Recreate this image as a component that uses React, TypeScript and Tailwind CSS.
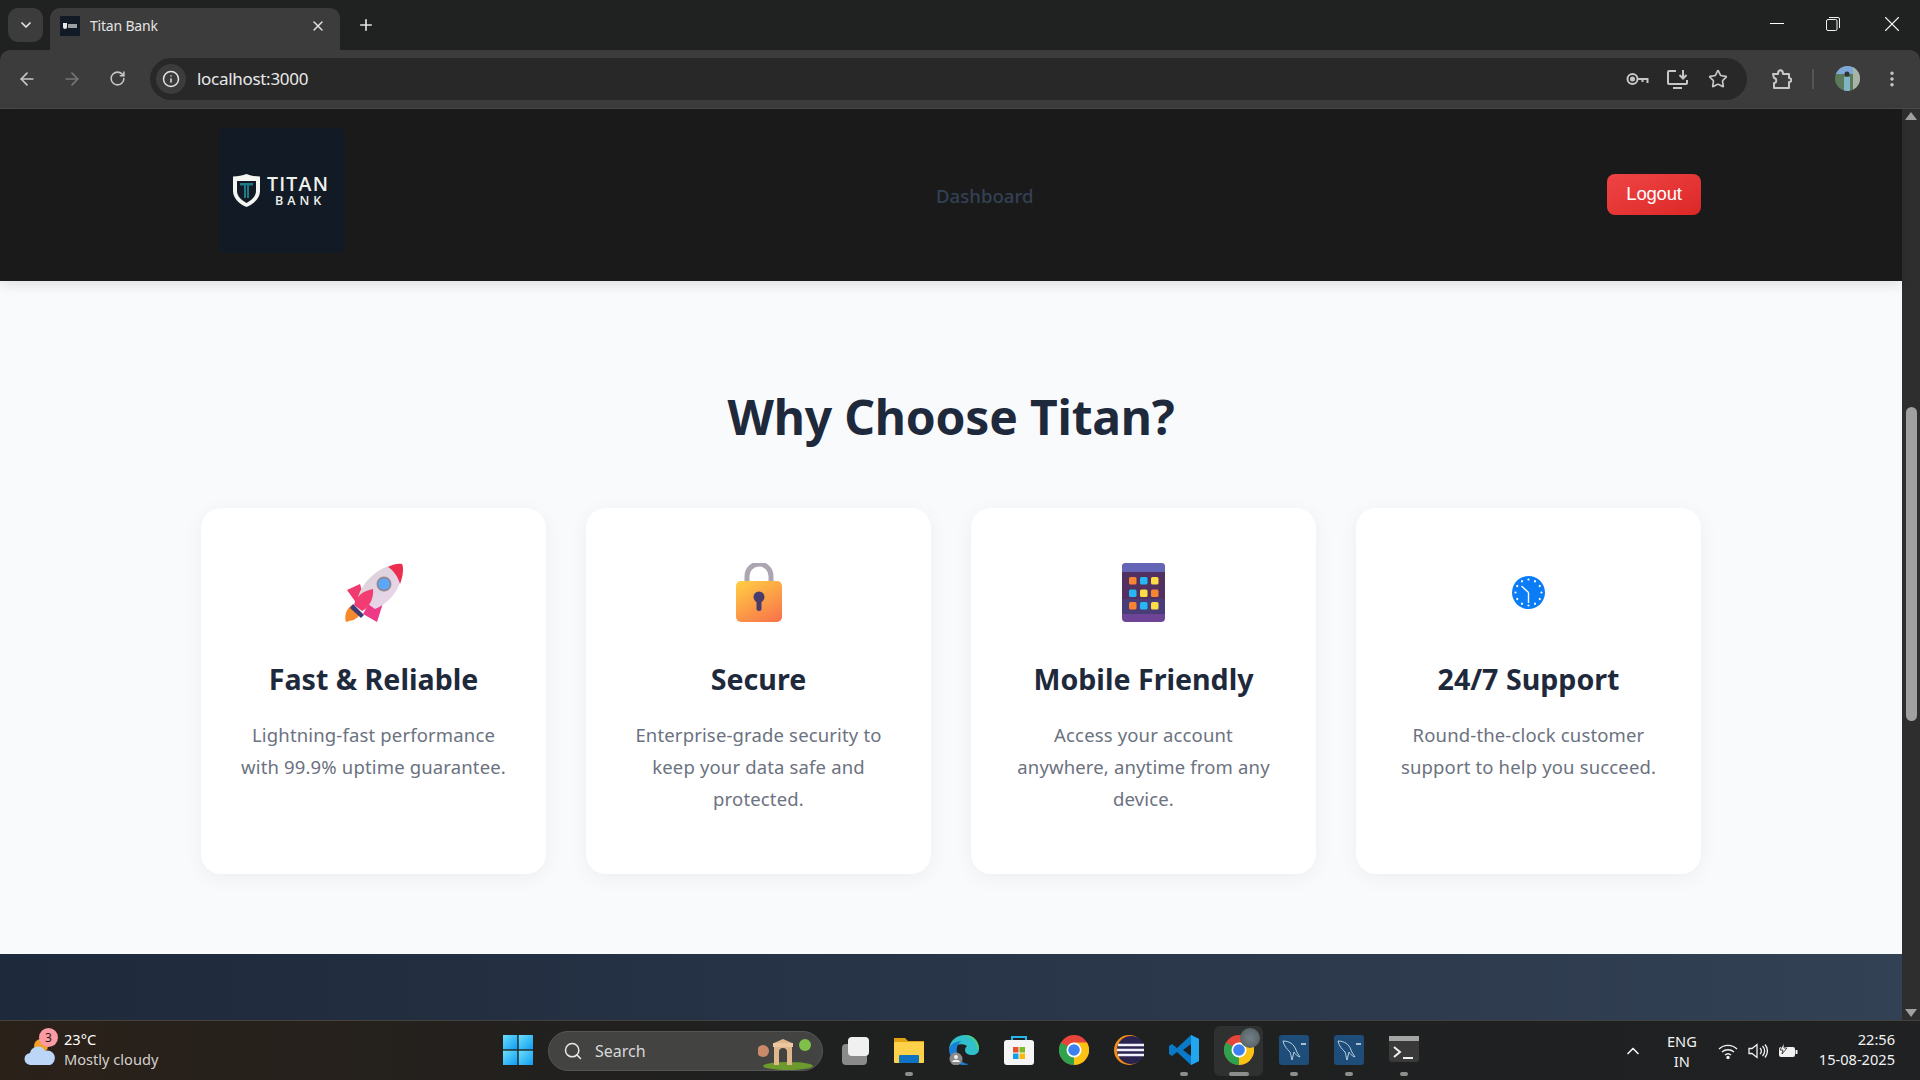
import { ArrowLeft, ArrowRight, ChevronDown, ChevronUp, EllipsisVertical, Info, Plus, RotateCw, Search, Star, X } from "lucide-react";

const features = [
  { icon: <RocketIcon />, title: "Fast & Reliable", text: "Lightning-fast performance with 99.9% uptime guarantee." },
  { icon: <LockIcon />, title: "Secure", text: "Enterprise-grade security to keep your data safe and protected." },
  { icon: <PhoneIcon />, title: "Mobile Friendly", text: "Access your account anywhere, anytime from any device." },
  { icon: <ClockIcon />, title: "24/7 Support", text: "Round-the-clock customer support to help you succeed." },
];

function RocketIcon() {
  return (
    <svg width="60" height="60" viewBox="0 0 60 60">
      <defs>
        <linearGradient id="rb" x1="0" y1="0" x2="1" y2="1">
          <stop offset="0" stopColor="#d8d2d4" />
          <stop offset="1" stopColor="#ecd6f0" />
        </linearGradient>
      </defs>
      <path d="M2 59c-2-6 0-13 6-17l9 8c-2 2-3 5-6 6-1 2-5 1-9 3z" fill="#f58a2c" />
      <path d="M3 27l13-6 6 20-9 0z" fill="#ee3a6c" />
      <path d="M24 42l17-8-8 25-14-8z" fill="#ee3a86" />
      <path d="M14 34C18 20 32 6 48 2l10 6c0 16-12 32-27 38z" fill="url(#rb)" />
      <path d="M44 4c5-3 11-4 14-3 2 3 1 13-2 20C54 14 50 8 44 4z" fill="#ee2e4e" />
      <path d="M10 42c2-8 8-14 19-16 1 6-2 18-11 22z" fill="#f23c72" />
      <path d="M9 41l11 11-3 3-11-10z" fill="#3d3a78" />
      <circle cx="40" cy="21" r="7.500" fill="#8f8a95" />
      <circle cx="40" cy="21" r="5.500" fill="#5ba6ff" />
    </svg>
  );
}

function LockIcon() {
  return (
    <svg width="46" height="59" viewBox="0 0 46 59">
      <defs>
        <linearGradient id="lb" x1="0.2" y1="0" x2="0.8" y2="1">
          <stop offset="0" stopColor="#ffc843" />
          <stop offset="1" stopColor="#f8774a" />
        </linearGradient>
      </defs>
      <path d="M11 22V13a12 12 0 0 1 24 0v9" fill="none" stroke="#aca6b2" strokeWidth="5" />
      <rect x="0" y="18" width="46" height="41" rx="5" fill="url(#lb)" />
      <circle cx="23" cy="34" r="5.500" fill="#4a3b6e" />
      <rect x="20.500" y="34" width="5" height="14" rx="2.500" fill="#4a3b6e" />
    </svg>
  );
}

function PhoneIcon() {
  const colors = ["#f58433", "#27b7f4", "#fbdc47", "#27b7f4", "#fbdc47", "#f58433", "#f58433", "#27b7f4", "#fbdc47"];
  return (
    <svg width="43" height="59" viewBox="0 0 43 59">
      <rect width="43" height="59" rx="4" fill="#6d4496" />
      <path d="M0 9V4a4 4 0 0 1 4-4h35a4 4 0 0 1 4 4v5z" fill="#6565b8" />
      <rect y="9" width="43" height="42" fill="#523060" />
      <rect y="36" width="43" height="15" fill="#4a3c78" />
      {colors.map((c, i) => (
        <rect key={i} x={7 + (i % 3) * 11} y={14 + Math.floor(i / 3) * 12.5} width="7.500" height="7.500" rx="1.500" fill={c} />
      ))}
    </svg>
  );
}

function ClockIcon() {
  const dots = Array.from({ length: 12 }, (_, i) => i * 30);
  return (
    <svg width="33" height="33" viewBox="0 0 33 33">
      <circle cx="16.500" cy="16.500" r="16.500" fill="#0a7cf5" />
      {dots.map((d) => (
        <circle key={d} cx="16.500" cy="3.500" r="1.100" fill="#fff" transform={`rotate(${d} 16.500 16.500)`} />
      ))}
      <path d="M16.500 16.500L9.500 10M16.500 16.500V27" stroke="#fff" strokeWidth="1.400" fill="none" />
    </svg>
  );
}

function Logo() {
  return (
    <div className="w-[125px] h-[125px] mb-[9px] rounded-md bg-[#111a25] flex items-center gap-[7px] shrink-0 pl-[14px]">
      <svg width="27" height="33" viewBox="0 0 27 33">
        <path d="M13.500 0c4 1.600 8.500 2.500 13.500 2.500V17c0 7-6 13-13.500 16C6 30 0 24 0 17V2.500C5 2.500 9.500 1.600 13.500 0z" fill="#f4f5f0" />
        <path d="M4 7h19v10c0 5-4 9-9.500 12C8 26 4 22 4 17z" fill="#111a25" />
        <path d="M7 9h13v2.500h-4V24h-5V11.500H7z" fill="#1d7a85" />
        <path d="M13 11h1v14h-1z" fill="#111a25" />
      </svg>
      <div className="flex flex-col items-center font-['Open_Sans',sans-serif] text-[#eef0ea] leading-none">
        <span className="text-[19.500px] font-semibold tracking-[1.200px]">TITAN</span>
        <span className="text-[12.500px] font-semibold tracking-[4px] mt-[1.500px] ml-[4px]">BANK</span>
      </div>
    </div>
  );
}

function BrowserChrome() {
  return (
    <div className="bg-[#202221] shrink-0">
      {/* Tab strip */}
      <div className="h-[50px] flex items-end text-[#e3e3e3]">
        <div className="w-[35px] h-[34px] ml-2 mb-2 rounded-[10px] bg-[#3c3c3c] flex items-center justify-center">
          <ChevronDown size={16} strokeWidth={2.600} />
        </div>
        <div className="w-[290px] h-[42px] ml-[7px] rounded-t-[10px] bg-[#3c3c3c] flex items-center pl-[10px] pr-[14px] pb-[7px]">
          <div className="w-5 h-5 bg-[#111a25] flex items-center justify-center gap-px">
            <div className="w-[4px] h-[6px] rounded-b-sm bg-[#e8e8e8]" />
            <div className="w-[9px] h-[4px] bg-[#99a0a0]" />
          </div>
          <span className="ml-[10px] text-[14px] font-['Noto_Sans',sans-serif] tracking-[-0.2px]">Titan Bank</span>
          <X size={16} strokeWidth={2.200} className="ml-auto" />
        </div>
        <div className="mb-[16px] ml-[17px]">
          <Plus size={18} strokeWidth={2.200} />
        </div>
        <div className="ml-auto flex items-center h-[50px] pb-[3px] text-[#f1f1f1]">
          <div className="w-[14px] h-px bg-white mr-[42px]" />
          <svg width="14" height="14" viewBox="0 0 14 14" className="mr-[39px]" fill="none" stroke="#f1f1f1">
            <rect x="0.500" y="2.500" width="10.500" height="11" rx="1.500" />
            <path d="M3 .5h9a1.500 1.500 0 0 1 1.500 1.500v9" />
          </svg>
          <X size={26} strokeWidth={1} className="mr-[15px]" />
        </div>
      </div>
      {/* Toolbar */}
      <div className="h-[59px] bg-[#3c3c3c] border-b border-[#4a4a4a] rounded-t-[10px] flex items-center text-[#c7c7c7] pb-px">
        <ArrowLeft size={20} className="ml-[17px]" />
        <ArrowRight size={20} className="ml-[25px] text-[#777]" />
        <RotateCw size={17} strokeWidth={2.200} className="ml-[27px]" />
        <div className="ml-[24px] w-[1597px] h-[42px] rounded-full bg-[#282828] flex items-center pl-[6px] pr-[19px]">
          <div className="w-[30px] h-[30px] rounded-full bg-[#3c3c3c] flex items-center justify-center">
            <Info size={18} className="text-[#e3e3e3]" />
          </div>
          <span className="ml-[11px] text-[17px] font-['Noto_Sans',sans-serif] text-[#e8e8e8] tracking-[-0.3px]">localhost:3000</span>
          <svg width="23" height="14" viewBox="0 0 22 14" fill="none" stroke="#c7c7c7" strokeWidth="2" className="ml-auto">
            <circle cx="6" cy="7" r="5" />
            <circle cx="6" cy="7" r="1.500" fill="#c7c7c7" />
            <path d="M11 7h10v4M16 7v3" />
          </svg>
          <svg width="21" height="20" viewBox="0 0 21 20" fill="none" stroke="#c7c7c7" strokeWidth="2" className="ml-[18px]">
            <path d="M9 2H2a1 1 0 0 0-1 1v11a1 1 0 0 0 1 1h17a1 1 0 0 0 1-1v-3" />
            <path d="M6 19h9M16 1v8M12.500 6l3.500 3.500L19.500 6" />
          </svg>
          <Star size={20} strokeWidth={2} className="ml-[20px]" />
        </div>
        <svg width="20" height="20" viewBox="0 0 20 20" fill="none" stroke="#c7c7c7" strokeWidth="2" className="ml-[25px]">
          <path d="M1 5h5c0-5 5-5 5 0h6v4c3 0 3 4 0 4v6H2v-5c3 0 3-5 0-5z" strokeLinejoin="round" />
        </svg>
        <div className="w-[2px] h-5 bg-[#555] ml-[20px]" />
        <svg width="25" height="25" viewBox="0 0 25 25" className="ml-[21px]">
          <defs>
            <clipPath id="av">
              <circle cx="12.500" cy="12.500" r="12.500" />
            </clipPath>
          </defs>
          <g clipPath="url(#av)">
            <rect width="25" height="25" fill="#5a7a5a" />
            <rect width="25" height="8" fill="#7fa8d8" />
            <rect x="18" width="7" height="25" fill="#a8b4a8" />
            <circle cx="12" cy="8" r="2.500" fill="#2c3438" />
            <rect x="9" y="11" width="6" height="14" fill="#7fb4c4" />
          </g>
        </svg>
        <EllipsisVertical size={20} strokeWidth={2.200} className="ml-[22px]" />
      </div>
    </div>
  );
}

function Scrollbar() {
  return (
    <div className="w-[18px] bg-[#2e2e2e] flex flex-col items-center shrink-0">
      <div className="mt-[3px] w-0 h-0 border-x-[6px] border-x-transparent border-b-[8px] border-b-[#a0a0a0]" />
      <div className="mt-[287px] w-[11px] h-[314px] rounded-full bg-[#a0a0a0]" />
      <div className="mt-auto mb-[3px] w-0 h-0 border-x-[6px] border-x-transparent border-t-[8px] border-t-[#a0a0a0]" />
    </div>
  );
}

function TaskIcon({ children, dot, active }: { children: React.ReactNode; dot?: boolean; active?: boolean }) {
  return (
    <div className="w-[55px] h-[59px] flex items-center justify-center relative">
      {active && <div className="absolute w-[49px] h-[50px] top-[5px] left-[3px] rounded-md bg-[#2f3131]" />}
      <div className="relative w-[30px] h-[30px] mb-[1px]">{children}</div>
      {dot && <div className={`absolute bottom-[4px] h-[4px] rounded-full bg-[#8d8d8d] ${active ? "w-[20px]" : "w-[8px]"}`} />}
    </div>
  );
}

function ChromeLogo() {
  return (
    <svg width="30" height="30" viewBox="0 0 30 30">
      <circle cx="15" cy="15" r="15" fill="#e8453a" />
      <path d="M15 15L2 7.500A15 15 0 0 0 15 30z" fill="#2fa24d" />
      <path d="M15 15v15A15 15 0 0 0 28 7.500H15z" fill="#fbc213" />
      <circle cx="15" cy="15" r="7.500" fill="#fff" />
      <circle cx="15" cy="15" r="5.800" fill="#3b82f0" />
    </svg>
  );
}

function MysqlIcon() {
  return (
    <svg width="30" height="30" viewBox="0 0 30 30">
      <rect width="30" height="30" rx="3" fill="#1d4d78" />
      <path d="M4 6c6 0 11 3 13 9 1 3 3 5 4 7-3-1-5-3-6-5l-2 8c-1-3-1-6-2-8-3-3-6-6-7-11z" fill="none" stroke="#b8cfe0" strokeWidth="1" />
      <path d="M22 9h5" stroke="#d8e4ee" strokeWidth="1.500" />
    </svg>
  );
}

function Taskbar() {
  return (
    <div className="h-[60px] shrink-0 border-t border-[#43423f] bg-linear-to-r from-[#2a2119] via-[#1f2020] via-40% to-[#1f2122] flex items-center text-white font-['Noto_Sans',sans-serif]">
      {/* Weather */}
      <div className="w-[64px] h-[59px] relative shrink-0">
        <svg width="34" height="34" viewBox="0 0 34 34" className="absolute left-[23px] top-[14px]">
          <circle cx="18" cy="11" r="7" fill="#f1a02c" />
          <path d="M8 30a6 6 0 0 1-1-12 8 8 0 0 1 15-2 7 7 0 0 1 5 14z" fill="#bcd6f7" />
        </svg>
        <div className="absolute left-[39px] top-[7px] w-[19px] h-[19px] rounded-full bg-[#fd9ba5] text-[#1e1512] text-[12px] flex items-center justify-center">3</div>
      </div>
      <div className="flex flex-col text-[14.600px] leading-[20px] w-[439px] shrink-0 pb-[4px]">
        <span>23°C</span>
        <span className="text-[#d4d1cd]">Mostly cloudy</span>
      </div>
      {/* Start */}
      <svg width="30" height="30" viewBox="0 0 30 30" className="shrink-0 mb-[1px]">
        <defs>
          <linearGradient id="wg" x1="0" y1="0" x2="1" y2="1">
            <stop offset="0" stopColor="#6ce0fb" />
            <stop offset="1" stopColor="#0f9cf3" />
          </linearGradient>
        </defs>
        <rect width="14.300" height="14.300" fill="url(#wg)" />
        <rect x="15.700" width="14.300" height="14.300" fill="url(#wg)" />
        <rect y="15.700" width="14.300" height="14.300" fill="url(#wg)" />
        <rect x="15.700" y="15.700" width="14.300" height="14.300" fill="url(#wg)" />
      </svg>
      {/* Search */}
      <div className="ml-[15px] w-[275px] h-[40px] rounded-full bg-[#434342] border border-[#555] flex items-center pl-[14px] shrink-0 relative">
        <Search size={20} strokeWidth={1.800} className="text-[#e8e8e8]" />
        <span className="ml-[12px] text-[16px] text-[#d8d8d8]">Search</span>
        <svg width="56" height="38" viewBox="0 0 56 38" className="absolute right-[8px] top-0">
          <ellipse cx="30" cy="34" rx="25" ry="4" fill="#6d9a2c" />
          <circle cx="5" cy="19" r="6" fill="#c98a6a" />
          <circle cx="47" cy="13" r="6" fill="#7fbf4a" />
          <path d="M16 33V11l9-4 9 4v22h-5V20a4 4 0 0 0-8 0v13z" fill="#e0b68c" />
          <rect x="15" y="11" width="20" height="4" fill="#eac9a0" />
        </svg>
      </div>
      {/* Pinned apps */}
      <div className="ml-[3px] flex items-center shrink-0">
        <TaskIcon>
          <div className="absolute left-[3px] top-[9px] w-[25px] h-[21px] rounded-sm bg-[#8a8a8a]" />
          <div className="absolute left-[9px] top-[2px] w-[21px] h-[19px] rounded-sm bg-[#f0f0f0]" />
        </TaskIcon>
        <TaskIcon dot>
          <svg width="30" height="30" viewBox="0 0 30 30">
            <path d="M0 3h11l3 3h16v3H0z" fill="#e0a40e" />
            <rect y="7" width="30" height="21" rx="1" fill="#fdd14a" />
            <rect x="5" y="20" width="20" height="8" rx="1" fill="#0f73c4" />
          </svg>
        </TaskIcon>
        <TaskIcon>
          <svg width="30" height="30" viewBox="0 0 30 30">
            <path d="M0 14C1 5 8 0 16 0c8 0 14 6 14 14 0 4-3 6-7 6-4 0-7-2-7-5 0-2 1-3 2-4-4-3-12-2-18 3z" fill="#2fc0c9" />
            <path d="M30 14c0-8-6-14-14-14 6 2 12 6 12 14z" fill="#4bd27a" />
            <path d="M0 14c1-4 6-8 13-8-4 2-6 6-5 12 1 6 6 11 12 11-2 1-4 1-5 1C7 30 0 23 0 14z" fill="#1c7fd6" />
            <circle cx="7" cy="24" r="6.500" fill="#8a8a8a" />
            <circle cx="7" cy="22" r="2" fill="#eee" />
            <path d="M3 27c1-3 7-3 8 0z" fill="#eee" />
          </svg>
        </TaskIcon>
        <TaskIcon>
          <svg width="30" height="30" viewBox="0 0 30 30">
            <path d="M8 7V2h14v5" fill="none" stroke="#26b6ea" strokeWidth="2" />
            <rect y="5" width="30" height="25" rx="3" fill="#f5f5f5" />
            <rect x="9" y="12" width="5.500" height="5.500" fill="#e8502e" />
            <rect x="15.500" y="12" width="5.500" height="5.500" fill="#7cb928" />
            <rect x="9" y="18.500" width="5.500" height="5.500" fill="#12a0e8" />
            <rect x="15.500" y="18.500" width="5.500" height="5.500" fill="#fbb910" />
          </svg>
        </TaskIcon>
        <TaskIcon>
          <ChromeLogo />
        </TaskIcon>
        <TaskIcon>
          <svg width="30" height="30" viewBox="0 0 30 30">
            <circle cx="15" cy="15" r="15" fill="#f28d1a" />
            <circle cx="17" cy="15" r="14" fill="#2a2350" />
            <path d="M4 10h26M3 15h27M4 20h26" stroke="#f1effa" strokeWidth="2.500" />
          </svg>
        </TaskIcon>
        <TaskIcon dot>
          <svg width="30" height="30" viewBox="0 0 30 30">
            <path d="M22 0l8 4v22l-8 4L8 17l-5 4-3-2v-8l3-2 5 4z" fill="#0a79c8" />
            <path d="M22 0l8 4v22l-8 4z" fill="#22a6ee" />
            <path d="M22 9l-8 6 8 6z" fill="#1f2021" />
          </svg>
        </TaskIcon>
        <TaskIcon dot active>
          <ChromeLogo />
          <div className="absolute -right-[6px] -top-[7px] w-5 h-5 rounded-full bg-[radial-gradient(circle,#73808a,#4e5a58)]" />
        </TaskIcon>
        <TaskIcon dot>
          <MysqlIcon />
        </TaskIcon>
        <TaskIcon dot>
          <MysqlIcon />
        </TaskIcon>
        <TaskIcon dot>
          <svg width="30" height="30" viewBox="0 0 30 30">
            <rect y="1" width="30" height="26" rx="3" fill="#3a3a3a" />
            <rect y="1" width="30" height="5" fill="#a4a4a4" />
            <path d="M5 12l6 5-6 5" fill="none" stroke="#f0f0f0" strokeWidth="2" />
            <path d="M14 23h10" stroke="#f0f0f0" strokeWidth="2" />
          </svg>
        </TaskIcon>
      </div>
      {/* Tray */}
      <div className="ml-auto flex items-center pr-[25px] text-[14.600px] leading-[20px] text-[#f2f2f2]">
        <ChevronUp size={20} strokeWidth={2} className="mr-[24px]" />
        <div className="flex flex-col items-center mr-[21px]">
          <span>ENG</span>
          <span>IN</span>
        </div>
        <svg width="20" height="16" viewBox="0 0 20 16" fill="none" stroke="#f2f2f2" strokeWidth="1.400">
          <path d="M1 6a13 13 0 0 1 18 0M4 9a9 9 0 0 1 12 0M7 12a4.500 4.500 0 0 1 6 0" />
          <circle cx="10" cy="14.500" r="1" fill="#f2f2f2" />
        </svg>
        <svg width="20" height="16" viewBox="0 0 20 16" fill="none" stroke="#f2f2f2" strokeWidth="1.300" className="ml-[10px]">
          <path d="M1 5.500h3L9 1.500v13l-5-4H1zM12 5a4 4 0 0 1 0 6M14.500 3a7 7 0 0 1 0 10M17 1.500a10 10 0 0 1 0 13" />
        </svg>
        <svg width="20" height="16" viewBox="0 0 20 16" className="ml-[10px]">
          <rect x="1" y="4" width="16" height="10" rx="2" fill="#f2f2f2" />
          <rect x="17.500" y="7" width="2" height="4" fill="#f2f2f2" />
          <path d="M6 0L2 7h3l-1 4 5-6H6z" fill="#f2f2f2" stroke="#1f2122" strokeWidth="0.800" />
        </svg>
        <div className="ml-[21px] flex flex-col items-end pb-[4px]">
          <span>22:56</span>
          <span>15-08-2025</span>
        </div>
      </div>
    </div>
  );
}

export default function App() {
  return (
    <div className="w-[1920px] h-[1080px] flex flex-col overflow-hidden font-['Noto_Sans',sans-serif]">
      <BrowserChrome />

      <div className="flex-1 flex min-h-0">
        <div className="flex-1 flex flex-col min-w-0">
          {/* Nav */}
          <div className="h-[172px] bg-[#1a1a1a] flex items-center pl-[219px] pr-[201px] relative shadow-[0_4px_12px_rgba(0,0,0,0.1)] shrink-0">
            <Logo />
            <span className="ml-[592px] mt-[1px] text-[18.600px] font-medium text-[#334155]">Dashboard</span>
            <button className="ml-auto mb-[2px] w-[94px] h-[41px] rounded-lg bg-linear-to-br from-[#ef4444] to-[#dc2626] text-white text-[18.500px] font-medium font-['Liberation_Sans',sans-serif] tracking-[-0.2px]">
              Logout
            </button>
          </div>

          {/* Features */}
          <div className="h-[673px] bg-[#f8fafc] px-[201px] pt-[107px] shrink-0">
            <h2 className="text-[48px] leading-[58px] font-bold text-[#1e293b] text-center tracking-[-0.2px]">Why Choose Titan?</h2>
            <div className="grid grid-cols-4 gap-[40px] mt-[62px]">
              {features.map((f) => (
                <div key={f.title} className="h-[366px] bg-white rounded-[20px] shadow-[0_4px_20px_rgba(0,0,0,0.05)] flex flex-col items-center pt-[55px] px-[40px]">
                  <div className="h-[59px] flex items-center justify-center">{f.icon}</div>
                  <h3 className="mt-[39px] text-[28.600px] leading-[36px] font-bold text-[#1e293b]">{f.title}</h3>
                  <p className="mt-[22px] text-[18.500px] leading-[32px] text-[#6b7280] text-center tracking-[0.15px]">{f.text}</p>
                </div>
              ))}
            </div>
          </div>

          {/* Footer */}
          <div className="flex-1 bg-linear-to-r from-[#1e293b] to-[#334155]" />
        </div>
        <Scrollbar />
      </div>

      <Taskbar />
    </div>
  );
}
